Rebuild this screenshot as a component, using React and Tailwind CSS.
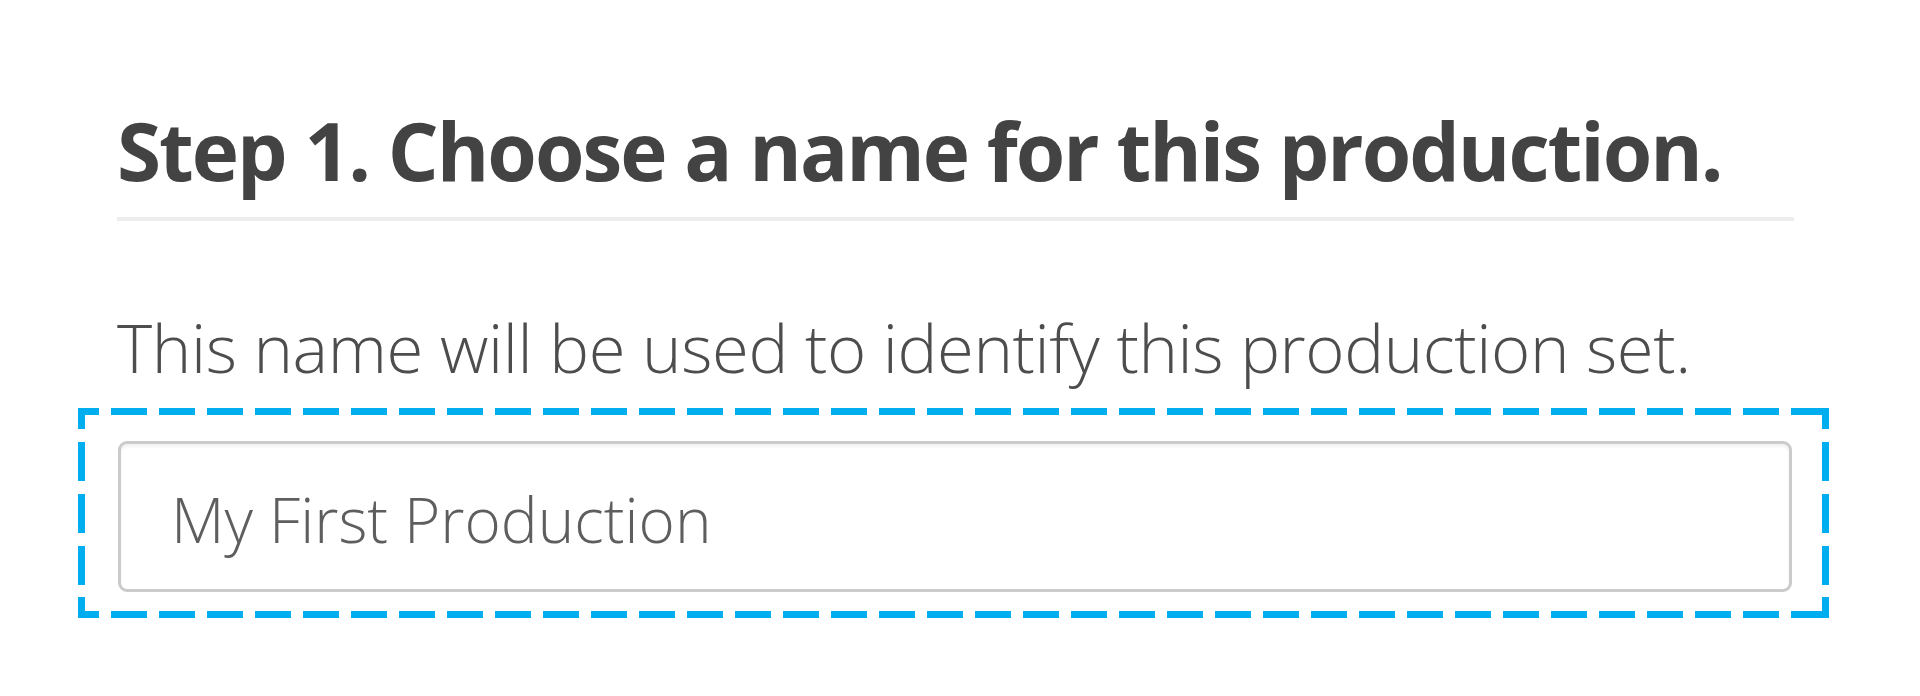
export default function App() {
  return (
    <div className="min-h-[696px] bg-white pt-[102px] font-['Open_Sans',sans-serif]">
      <div className="ml-[117px] w-[1677px]">
        <h2 className="border-b-4 border-[#ededed] pb-[19px] text-[80px] leading-[96px] font-bold tracking-[-2px] text-[#434343]">
          Step 1. Choose a name for this production.
        </h2>

        <p className="mt-[86px] text-[67px] leading-[80px] font-light tracking-[-0.4px] text-[#4d4d4d]">
          This name will be used to identify this production set.
        </p>

        <div className="relative mt-[21px] -ml-[39px] w-[1751px] pt-[33px] pr-[37px] pb-[26px] pl-[40px]">
          <DashedFrame />
          <input
            type="text"
            readOnly
            defaultValue="My First Production"
            className="block h-[151px] w-full rounded-[9px] border-[3px] border-[#cbcbcb] bg-white pl-[50px] pt-[4px] text-[62px] font-light text-[#5e5e5e] shadow-[inset_0_3px_3px_rgba(0,0,0,0.05)] outline-none"
          />
        </div>
      </div>
    </div>
  )
}

function DashedFrame() {
  const w = 1751
  const h = 210
  const s = 7
  const c = '#00aeef'
  return (
    <svg className="pointer-events-none absolute inset-0" width={w} height={h}>
      <g stroke={c} strokeWidth={s} fill="none">
        <line x1={0} y1={s / 2} x2={w} y2={s / 2} strokeDasharray="36 12" strokeDashoffset={15} />
        <line x1={0} y1={h - s / 2} x2={w} y2={h - s / 2} strokeDasharray="36 12" strokeDashoffset={15} />
        <line x1={s / 2} y1={0} x2={s / 2} y2={h} strokeDasharray="39 13" strokeDashoffset={18} />
        <line x1={w - s / 2} y1={0} x2={w - s / 2} y2={h} strokeDasharray="39 13" strokeDashoffset={18} />
        {/* corners */}
        <path d={`M${s / 2} 21 V${s / 2} H21`} />
        <path d={`M${w - 21} ${s / 2} H${w - s / 2} V21`} />
        <path d={`M${s / 2} ${h - 21} V${h - s / 2} H21`} />
        <path d={`M${w - 21} ${h - s / 2} H${w - s / 2} V${h - 21}`} />
      </g>
    </svg>
  )
}
